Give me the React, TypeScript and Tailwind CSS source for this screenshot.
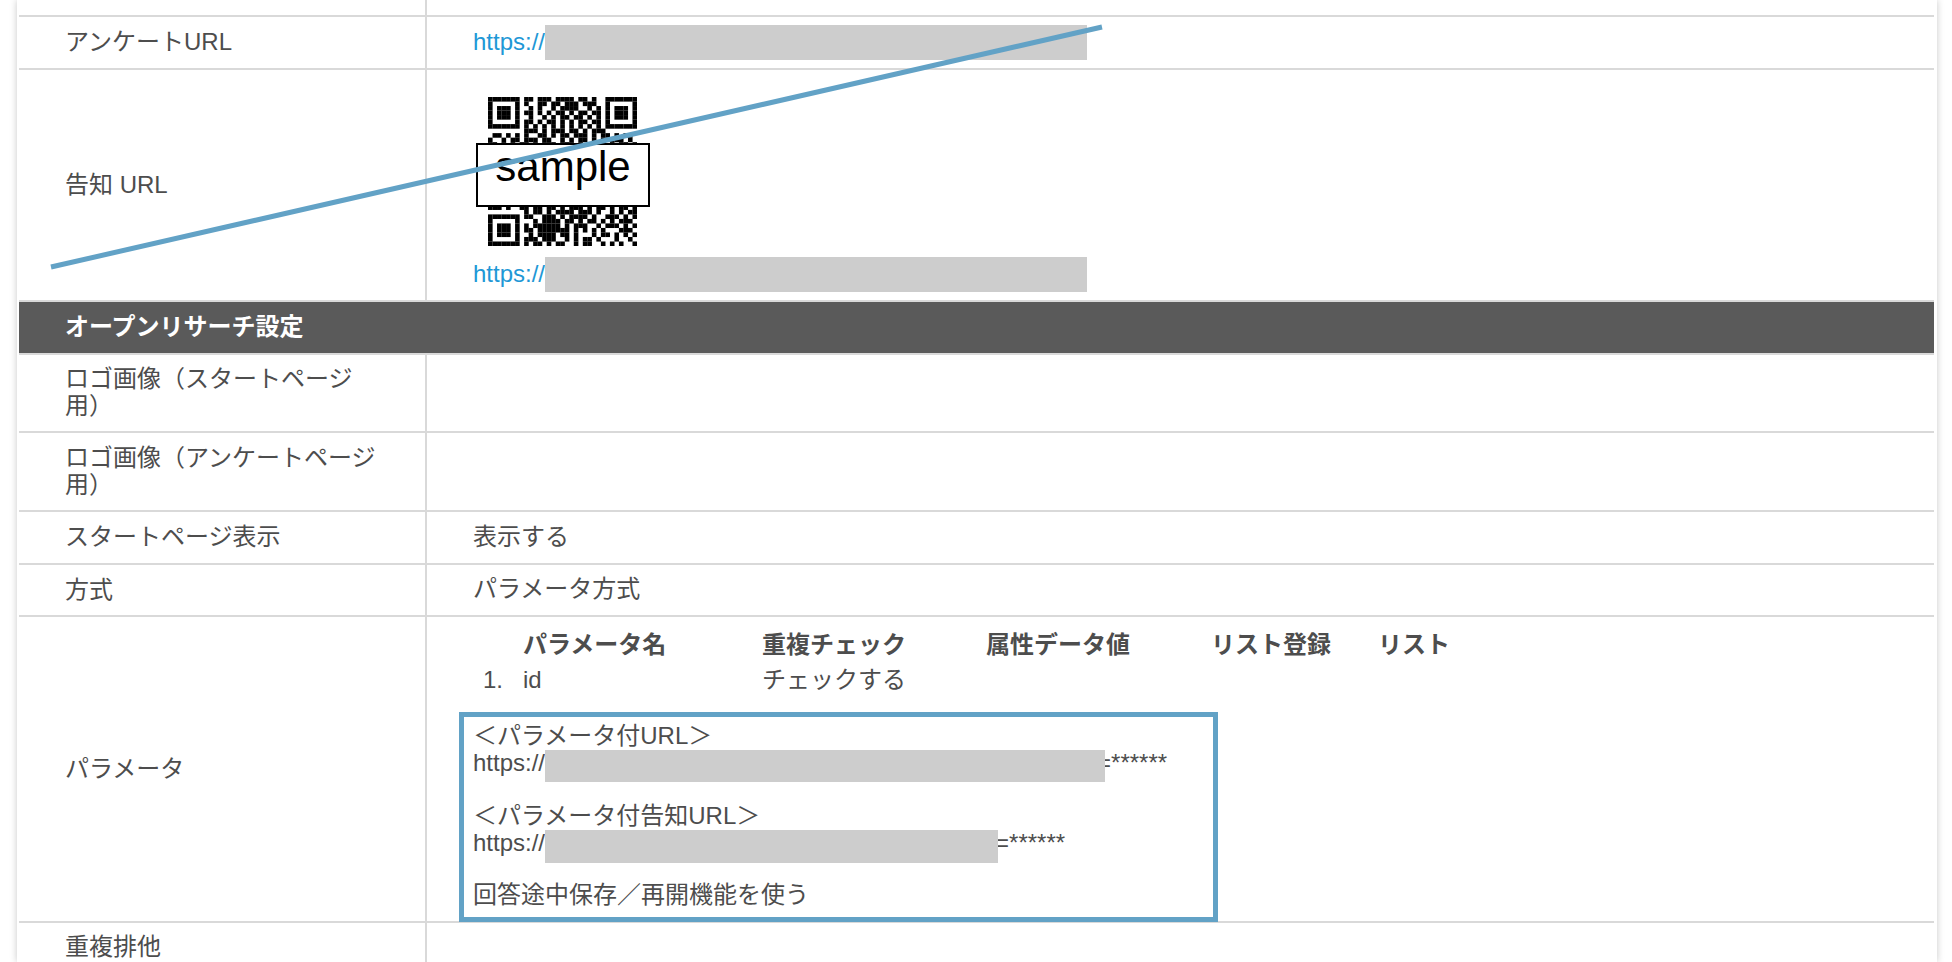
const FINDER = ["#######", "#.....#", "#.###.#", "#.###.#", "#.###.#", "#.....#", "#######"];

const TOP_MIDDLE = [
  ".##.###.####.##.#..",
  ".#..##.##.###.###..",
  "..#.#..#.####..#.#.",
  ".##.#.#.##.#.##.##.",
  "..#..#.#.##.##.#.#.",
  ".##.#.##.#.#.##.##.",
  ".#.#.#.#.#.#.#.#.#.",
];

const TOP_REST = [
  "........###.#.###.##.#.###.......",
  ".##.#.#.#..##.#.##.###.#.##.#.##.",
  "#..#.##.###.##..#.#.##.#.#.###.#.",
  "##.#.#.##.#.###.###.#.####.#.##.#",
];

const BOTTOM_REST = [
  "###.#..##.##.##.#.###.#.##.#.##.#",
  "........#.##.#.####.###.#..#.#.##",
];

const BOTTOM_RIGHT = [
  ".##..###.#.####.#..###.#.#",
  "...#.####.##.#.##.#.#.###.",
  ".#.######.#.###..#.###.#.#",
  ".##.#######.#.#.#.#...###.",
  "..#.####.##.#...#.##.#.#.#",
  ".###.###..#.#.##.#...#..#.",
  ".#.##.#.##..#.##..#.#.#..#",
];

function QrCode() {
  const rows: [number, string][] = [
    ...FINDER.map((f, i): [number, string] => [i, f + TOP_MIDDLE[i] + f]),
    ...TOP_REST.map((r, i): [number, string] => [i + 7, r]),
    ...BOTTOM_REST.map((r, i): [number, string] => [i + 24, r]),
    ...FINDER.map((f, i): [number, string] => [i + 26, f + BOTTOM_RIGHT[i]]),
  ];
  return (
    <svg width="149" height="149" viewBox="0 0 33 33" className="block blur-[0.4px]">
      {rows.map(([y, row]) =>
        row
          .split("")
          .map((c, x) => (c === "#" ? <rect key={`${x}-${y}`} x={x} y={y} width="1.02" height="1.02" fill="#000" /> : null)),
      )}
    </svg>
  );
}

function Row({
  h,
  label,
  children,
}: {
  h: string;
  label?: React.ReactNode;
  children?: React.ReactNode;
}) {
  return (
    <div className={`flex shrink-0 border-b-2 border-[#d9d9d9] ${h}`}>
      <div className="flex w-[408px] shrink-0 items-center border-r-2 border-[#d9d9d9] pb-[2px] pl-[46px] pr-[40px] leading-[27px]">
        <div>{label}</div>
      </div>
      <div className="flex min-w-0 flex-1 items-center pb-[2px] pl-[46px]">{children}</div>
    </div>
  );
}

function Redacted({ w, h }: { w: string; h: string }) {
  return <span className={`relative z-10 block shrink-0 bg-[#cdcdcd] ${w} ${h}`} />;
}

export default function App() {
  return (
    <div className="relative h-[962px] overflow-hidden bg-white font-['Liberation_Sans','Noto_Sans_CJK_JP',sans-serif] text-[24px] text-[#4d4d4d]">
      <div className="ml-[17px] flex h-[962px] w-[1920px] flex-col bg-white pl-[2px] pr-[3px] shadow-[0_0_7px_rgba(0,0,0,0.22)]">
        <Row h="h-[17px]" />
        <Row h="h-[53px]" label="アンケートURL">
          <div className="mt-[8px] flex h-[35px] items-center self-start text-[#1f98d6]">
            <span className="pb-[2px]">https://</span>
            <Redacted w="w-[542px]" h="h-[35px]" />
          </div>
        </Row>
        <Row h="h-[232px]" label="告知 URL">
          <div className="flex flex-col self-start pt-[27px]">
            <div className="relative ml-[15px] h-[149px] w-[149px]">
              <QrCode />
              <div className="absolute left-[-12px] top-[46px] z-20 h-[64px] w-[174px] border-2 border-black bg-white text-center text-[42px] leading-[44px] text-black">
                sample
              </div>
            </div>
            <div className="mt-[10px] flex items-center text-[#1f98d6]">
              <span>https://</span>
              <Redacted w="w-[542px]" h="h-[35px]" />
            </div>
          </div>
        </Row>
        <div className="flex h-[53px] shrink-0 items-center border-b-2 border-[#d9d9d9] bg-[#5a5a5a] pb-[2px] pl-[46px] font-bold text-white">
          オープンリサーチ設定
        </div>
        <Row h="h-[78px]" label="ロゴ画像（スタートページ用）" />
        <Row h="h-[79px]" label="ロゴ画像（アンケートページ用）" />
        <Row h="h-[53px]" label="スタートページ表示">
          表示する
        </Row>
        <Row h="h-[52px]" label="方式">
          パラメータ方式
        </Row>
        <Row h="h-[306px]" label="パラメータ">
          <div className="flex flex-col self-start">
            <div className="grid grid-cols-[50px_239px_224px_225px_167px_auto] grid-rows-[35px_27px] pt-[14px] leading-[27px]">
              <span />
              <span className="font-bold">パラメータ名</span>
              <span className="font-bold">重複チェック</span>
              <span className="font-bold">属性データ値</span>
              <span className="font-bold">リスト登録</span>
              <span className="font-bold">リスト</span>
              <span className="pl-[10px]">1.</span>
              <span>id</span>
              <span>チェックする</span>
            </div>
            <div className="ml-[-14px] mt-[19px] h-[210px] w-[759px] border-[5px] border-[#62a2c6] pl-[9px] pt-[6px] leading-[27px]">
              <div className="h-[27px] leading-[25px]">＜パラメータ付URL＞</div>
              <div className="flex items-start leading-[25px]">
                <span>https://</span>
                <Redacted w="w-[560px]" h="h-[32px]" />
                <span className="ml-[-8px]">=******</span>
              </div>
              <div className="mt-[20px]">＜パラメータ付告知URL＞</div>
              <div className="mt-px flex items-start leading-[25px]">
                <span>https://</span>
                <Redacted w="w-[453px]" h="h-[33px]" />
                <span className="ml-[-3px]">=******</span>
              </div>
              <div className="mt-[18px]">回答途中保存／再開機能を使う</div>
            </div>
          </div>
        </Row>
        <Row h="h-[50px]" label="重複排他" />
      </div>
      <svg className="pointer-events-none absolute left-0 top-0 z-30" width="1952" height="962" fill="none">
        <line x1="51" y1="267" x2="1102" y2="27" stroke="#62a2c6" strokeWidth="5" />
      </svg>
    </div>
  );
}
